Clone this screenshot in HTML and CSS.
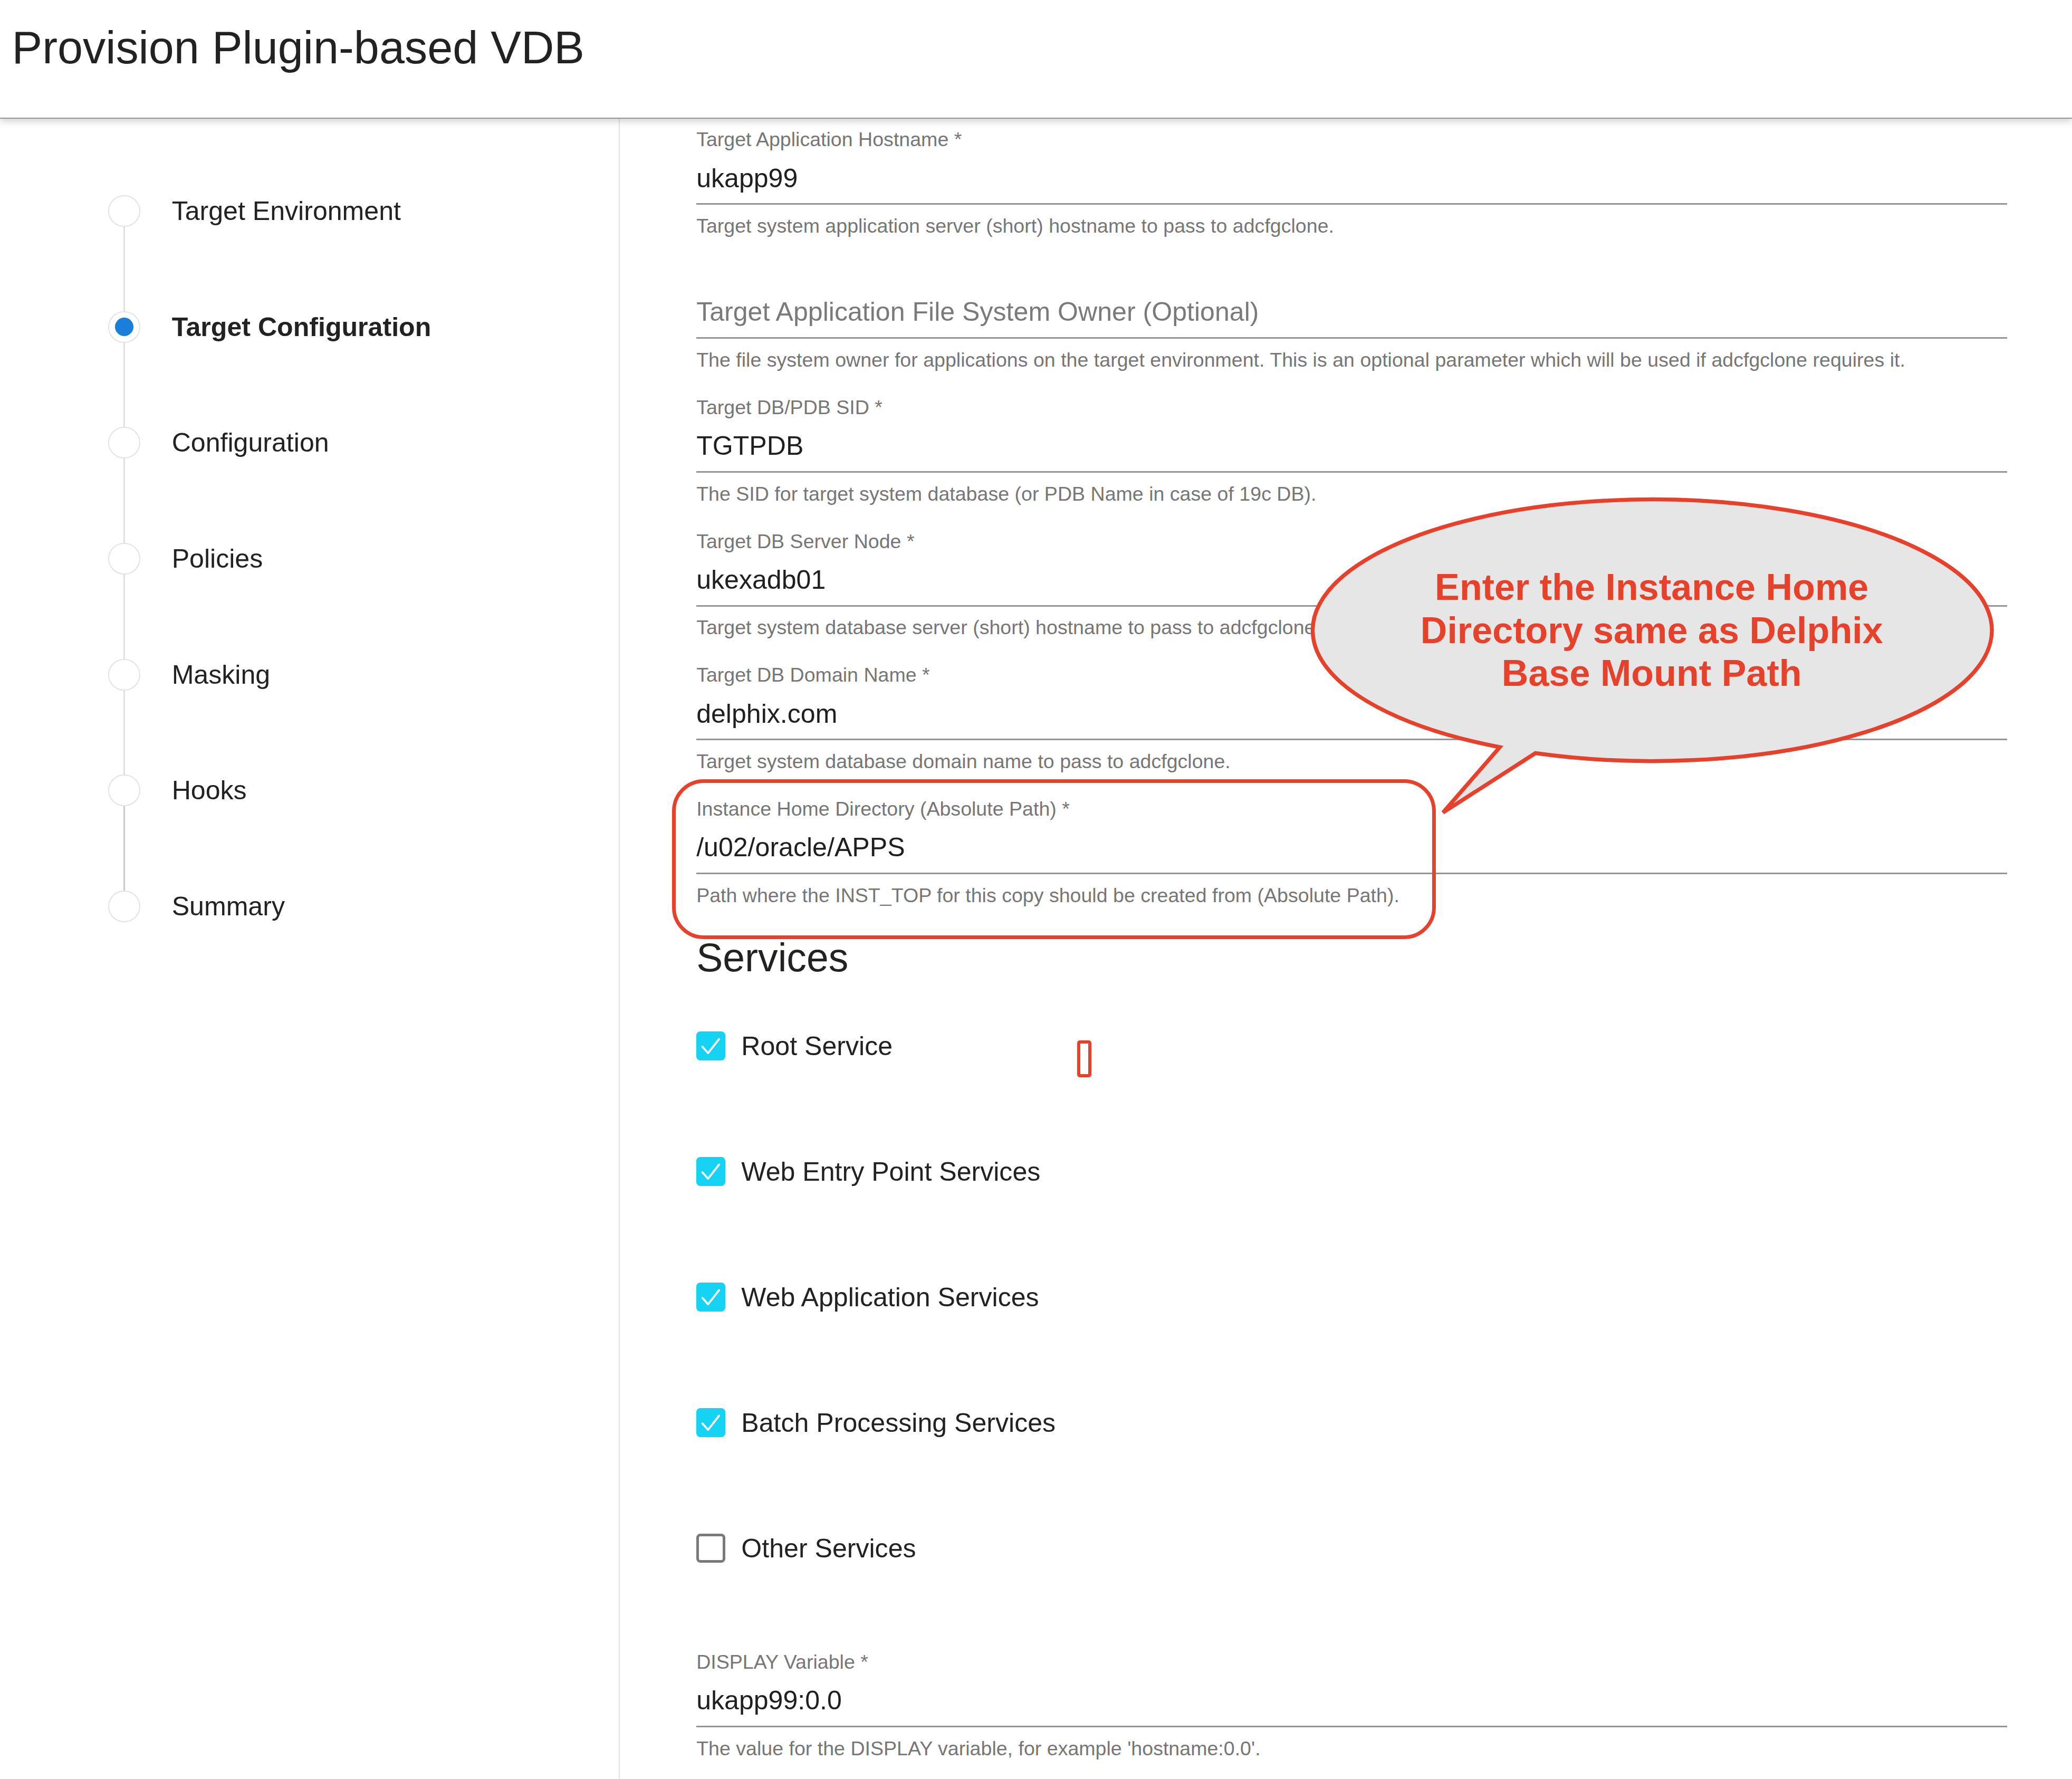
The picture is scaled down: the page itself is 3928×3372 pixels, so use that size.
FILE: index.html
```html
<!DOCTYPE html>
<html lang="en">
  <head>
    <meta charset="UTF-8" />
    <meta name="viewport" content="width=device-width, initial-scale=1.0" />
    <title>Provision Plugin-based VDB</title>
    <link rel="stylesheet" href="styles.css">
  </head>
  <body>
    <div class="page">
      <header class="topbar">
        <h1>Provision Plugin-based VDB</h1>
      </header>

      <div class="layout">
        <nav class="steps">
          <div class="step"><span class="dot"></span><span>Target Environment</span></div>
          <div class="step active"><span class="dot"></span><span>Target Configuration</span></div>
          <div class="step"><span class="dot"></span><span>Configuration</span></div>
          <div class="step"><span class="dot"></span><span>Policies</span></div>
          <div class="step"><span class="dot"></span><span>Masking</span></div>
          <div class="step"><span class="dot"></span><span>Hooks</span></div>
          <div class="step"><span class="dot"></span><span>Summary</span></div>
        </nav>

        <main class="form">
          <div class="field">
            <div class="label">Target Application Hostname *</div>
            <div class="input">ukapp99</div>
            <div class="help">Target system application server (short) hostname to pass to adcfgclone.</div>
          </div>
          <div class="field">
            <div class="label"></div>
            <div class="input empty">Target Application File System Owner (Optional)</div>
            <div class="help">The file system owner for applications on the target environment. This is an optional parameter which will be used if adcfgclone requires it.</div>
          </div>
          <div class="field">
            <div class="label">Target DB/PDB SID *</div>
            <div class="input">TGTPDB</div>
            <div class="help">The SID for target system database (or PDB Name in case of 19c DB).</div>
          </div>
          <div class="field">
            <div class="label">Target DB Server Node *</div>
            <div class="input">ukexadb01</div>
            <div class="help">Target system database server (short) hostname to pass to adcfgclone.</div>
          </div>
          <div class="field">
            <div class="label">Target DB Domain Name *</div>
            <div class="input">delphix.com</div>
            <div class="help">Target system database domain name to pass to adcfgclone.</div>
          </div>
          <div class="field">
            <div class="label">Instance Home Directory (Absolute Path) *</div>
            <div class="input">/u02/oracle/APPS</div>
            <div class="help">Path where the INST_TOP for this copy should be created from (Absolute Path).</div>
          </div>

          <h2 class="section">Services</h2>

          <div class="check on">
            <span class="box"><svg viewBox="0 0 22 22"><path d="M4.6 11.6l4.3 4.8 8.3-10.6" /></svg></span>
            Root Service
            <span class="flag"></span>
          </div>
          <div class="check on">
            <span class="box"><svg viewBox="0 0 22 22"><path d="M4.6 11.6l4.3 4.8 8.3-10.6" /></svg></span>
            Web Entry Point Services
          </div>
          <div class="check on">
            <span class="box"><svg viewBox="0 0 22 22"><path d="M4.6 11.6l4.3 4.8 8.3-10.6" /></svg></span>
            Web Application Services
          </div>
          <div class="check on">
            <span class="box"><svg viewBox="0 0 22 22"><path d="M4.6 11.6l4.3 4.8 8.3-10.6" /></svg></span>
            Batch Processing Services
          </div>
          <div class="check">
            <span class="box"></span>
            Other Services
          </div>

          <div class="field display-var">
            <div class="label">DISPLAY Variable *</div>
            <div class="input">ukapp99:0.0</div>
            <div class="help">The value for the DISPLAY variable, for example 'hostname:0.0'.</div>
          </div>
        </main>
      </div>

      <!-- annotations drawn over the screenshot -->
      <div class="highlight"></div>
      <div class="callout">
        <svg viewBox="0 0 520 245">
          <path d="M145 190.5 L102 240 L172 195 A257 99 0 1 0 145 190.5 Z" />
        </svg>
        <p>Enter the Instance Home<br>Directory same as Delphix<br>Base Mount Path</p>
      </div>
    </div>
  </body>
</html>
```

FILE: styles.css
```css
body {
  margin: 0;
  zoom: 2.505;
  font-family: "Liberation Sans", Arial, Helvetica, sans-serif;
  color: #222;
  background: #fff;
}
.page {
  position: relative;
  height: 1346px;
  overflow: hidden;
  display: flex;
  flex-direction: column;
}

/* header */
.topbar {
  position: relative;
  z-index: 1;
  flex-shrink: 0;
  height: 89px;
  background: #fff;
  border-bottom: 1px solid #959595;
  box-shadow: 0 2px 5px rgba(0, 0, 0, 0.18);
}
.topbar h1 {
  margin: 0;
  padding: 16px 0 0 9px;
  font-size: 34.5px;
  line-height: 40px;
  font-weight: normal;
  color: #222;
}

.layout {
  flex: 1;
  min-height: 0;
  display: flex;
}

/* stepper */
.steps {
  width: 469px;
  flex-shrink: 0;
  box-sizing: border-box;
  border-right: 1px solid #e2e2e2;
  padding-top: 26px;
}
.step {
  position: relative;
  height: 87.7px;
  display: flex;
  align-items: center;
  padding-left: 82px;
  font-size: 20px;
  color: #222;
}
.step::after {
  content: "";
  position: absolute;
  left: 93.3px;
  top: calc(50% + 12px);
  width: 1.5px;
  height: 63.7px;
  background: #e0e0e0;
}
.step:nth-child(6)::after {
  background: #cbcbcb;
}
.step:last-child::after {
  display: none;
}
.dot {
  width: 24px;
  height: 24px;
  box-sizing: border-box;
  border: 1px solid #e3e3e3;
  border-radius: 50%;
  background: #fff;
  margin-right: 24px;
  display: flex;
  align-items: center;
  justify-content: center;
}
.active {
  font-weight: bold;
}
.active .dot::after {
  content: "";
  width: 14px;
  height: 14px;
  border-radius: 50%;
  background: #1a7fdb;
}

/* form */
.form {
  flex: 1;
  padding: 7px 49px 0 58px;
}
.field {
  height: 101.3px;
}
.label {
  height: 18px;
  font-size: 15px;
  line-height: 18px;
  color: #767676;
}
.input {
  height: 40.3px;
  box-sizing: border-box;
  padding-top: 8px;
  font-size: 20px;
  line-height: 24px;
  color: #1f1f1f;
  border-bottom: 1.3px solid #959595;
}
.input.empty {
  color: #7a7a7a;
}
.help {
  margin-top: 7px;
  font-size: 15px;
  line-height: 18px;
  color: #767676;
  white-space: nowrap;
}

.section {
  margin: 2px 0 1.5px;
  font-size: 30px;
  line-height: 36px;
  font-weight: normal;
  color: #222;
}

.check {
  position: relative;
  height: 95px;
  display: flex;
  align-items: center;
  gap: 12px;
  font-size: 20px;
  color: #222;
}
.box {
  width: 22px;
  height: 22px;
  box-sizing: border-box;
  border: 2px solid #7a7a7a;
  border-radius: 3px;
}
.check.on .box {
  border: none;
  background: #17d3f3;
}
.box svg {
  display: block;
  width: 22px;
  height: 22px;
}
.box path {
  fill: none;
  stroke: #fff;
  stroke-width: 1.5;
  stroke-linecap: round;
  stroke-linejoin: round;
}
.flag {
  position: absolute;
  left: 288px;
  top: 43px;
  width: 11px;
  height: 28px;
  box-sizing: border-box;
  border: 2.5px solid #e6412b;
  border-radius: 2px;
}

.display-var {
  margin-top: 29.7px;
}

/* annotations */
.highlight {
  position: absolute;
  left: 508.5px;
  top: 589.5px;
  width: 578px;
  height: 121px;
  box-sizing: border-box;
  border: 3px solid #e6412b;
  border-radius: 24px;
}
.callout {
  position: absolute;
  left: 990px;
  top: 375px;
  width: 520px;
  height: 245px;
}
.callout svg {
  position: absolute;
  left: 0;
  top: 0;
  width: 520px;
  height: 245px;
}
.callout path {
  fill: #e6e6e6;
  stroke: #e6412b;
  stroke-width: 3;
  stroke-linejoin: miter;
}
.callout p {
  position: absolute;
  left: 0;
  right: 0;
  top: 53.5px;
  margin: 0;
  text-align: center;
  font-size: 28px;
  line-height: 32.5px;
  font-weight: bold;
  color: #e6412b;
}
```
